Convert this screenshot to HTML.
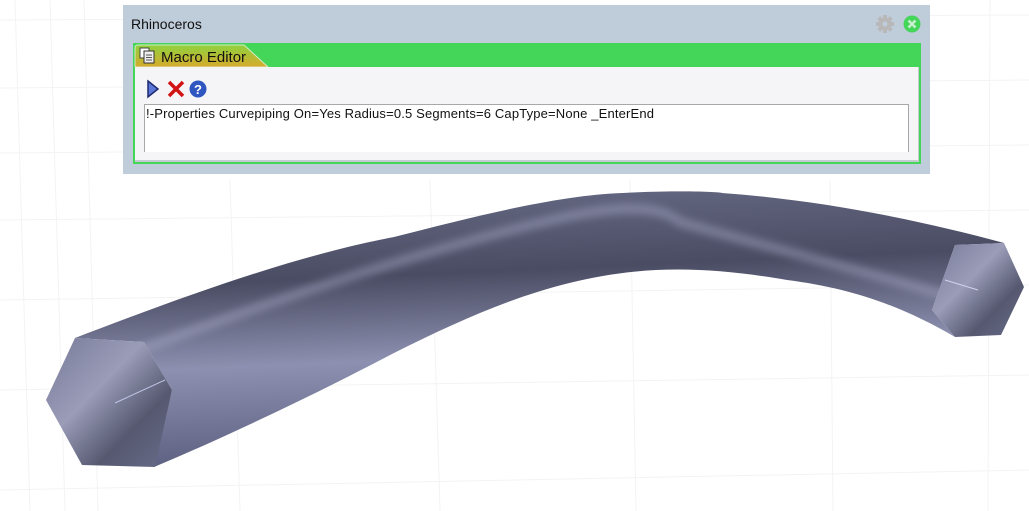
<!DOCTYPE html>
<html><head><meta charset="utf-8"><style>
body{margin:0;width:1029px;height:511px;overflow:hidden;background:#fff;font-family:"Liberation Sans",sans-serif;position:relative}
svg{position:absolute;left:0;top:0}
.panel{position:absolute;left:123px;top:5px;width:807px;height:169px;background:#bfccd9}
.title{position:absolute;left:8px;top:11px;font-size:14px;color:#111}
.frame{position:absolute;left:10px;top:38px;width:788px;height:121px;background:#44d658}
.content{position:absolute;left:2px;top:24px;width:784px;height:95px;background:#f5f5f8;border-bottom:2px solid #c6cbd2;border-right:1px solid #c6cbd2;box-sizing:border-box}
.box{position:absolute;left:9px;top:37px;width:765px;height:48px;background:#fff;border:1px solid #a8a8a8;border-bottom:none;box-sizing:border-box;font-size:13px;letter-spacing:0.16px;color:#111;padding:1px 0 0 1px;white-space:nowrap}
</style></head><body>
<svg width="1029" height="511">
<defs>
<linearGradient id="b" x1="0" y1="0" x2="0.15" y2="1"><stop offset="0" stop-color="#6a6d88"/><stop offset="0.35" stop-color="#4a4c63"/><stop offset="0.65" stop-color="#8d90b0"/><stop offset="1" stop-color="#5d6080"/></linearGradient>
<linearGradient id="c" x1="0" y1="0" x2="1" y2="1"><stop offset="0" stop-color="#777a98"/><stop offset="0.4" stop-color="#9a9cb8"/><stop offset="0.7" stop-color="#55586f"/><stop offset="1" stop-color="#6a6d8a"/></linearGradient>
<filter id="bl"><feGaussianBlur stdDeviation="4"/></filter>
</defs>
<g stroke="#f3f3f3" stroke-width="1" fill="none">
<path d="M0 20 L1029 15 M0 88 L1029 80 M0 153 L1029 145 M0 220 L1029 210 M0 300 L1029 285 M0 390 L1029 375 M0 490 L1029 470"/>
<path d="M15 0 L30 511 M50 0 L65 511 M84 0 L98 511 M230 180 L240 511 M430 180 L440 511 M630 180 L636 511 M830 180 L833 511 M990 0 L988 511"/>
</g>
<path d="M75 338 C200 290 300 255 394 237 C480 215 560 195 623 193 C680 190 722 192 722 193 C820 200 920 220 1004 243 L955 245 L932 310 L955 337 C900 305 850 288 787 280 C740 272 700 268 656 270 C560 275 480 310 394 353 C320 392 230 435 154 467 L172 390 L144 342 Z" fill="url(#b)"/>
<path d="M140 350 C260 305 420 250 560 218 C620 205 660 205 680 222 C760 245 880 275 960 300" stroke="#a9abc8" stroke-width="10" fill="none" opacity="0.45" filter="url(#bl)"/>
<path d="M75 338 L144 342 L172 390 L155 467 L82 465 L46 400 Z" fill="url(#c)"/>
<path d="M955 245 L1004 243 L1024 287 L1001 335 L955 337 L932 310 Z" fill="url(#c)"/>
<line x1="115" y1="403" x2="165" y2="380" stroke="#c0c4e6" stroke-width="1"/>
<line x1="945" y1="280" x2="978" y2="290" stroke="#d0d2ee" stroke-width="1"/>
</svg>
<div class="panel">
<div class="title">Rhinoceros</div>
<svg width="20" height="20" style="left:752px;top:9px" viewBox="0 0 20 20"><g fill="#b8b8b8"><circle cx="10" cy="10" r="6.5"/><rect x="8" y="1" width="4" height="18"/><rect x="1" y="8" width="18" height="4"/><rect x="8" y="1" width="4" height="18" transform="rotate(45 10 10)"/><rect x="8" y="1" width="4" height="18" transform="rotate(-45 10 10)"/></g><circle cx="10" cy="10" r="2.5" fill="#bfccd9"/></svg>
<svg width="20" height="20" style="left:779px;top:9px" viewBox="0 0 20 20"><circle cx="10" cy="10" r="8.5" fill="#44d658"/><path d="M6.5 6.5 L13.5 13.5 M13.5 6.5 L6.5 13.5" stroke="#c9efd0" stroke-width="2.6"/></svg>
<div class="frame">
<svg width="140" height="24" style="left:0;top:0"><defs><linearGradient id="t" x1="0" y1="0" x2="0" y2="1"><stop offset="0" stop-color="#8fd23e"/><stop offset="1" stop-color="#d7a92c"/></linearGradient></defs><path d="M2 24 L2 5 Q2 2 5 2 L111 2 L135 24 Z" fill="url(#t)" stroke="#d9e8c0" stroke-width="1"/>
<g transform="translate(7,5)"><rect x="0" y="0" width="9" height="10" fill="#fff" stroke="#444"/><rect x="4" y="3" width="10" height="12" fill="#eee" stroke="#333"/><path d="M6 7h6M6 9.5h6M6 12h6" stroke="#555"/></g>
<text x="28" y="19" font-size="15" font-family="Liberation Sans, sans-serif" fill="#111">Macro Editor</text></svg>
<div class="content">
<svg width="80" height="24" style="left:10px;top:11px">
<path d="M3 3 L13 11 L3 19 Z" fill="#5b76d6" stroke="#1c2a70" stroke-width="1.5"/>
<path d="M24 4 L38 18 M38 4 L24 18" stroke="#d21414" stroke-width="3.5"/>
<circle cx="53" cy="11" r="8.5" fill="#2f55c0"/><text x="53" y="16" font-size="13" font-weight="bold" text-anchor="middle" fill="#fff" font-family="Liberation Sans, sans-serif">?</text>
</svg>
<div class="box">!-Properties Curvepiping On=Yes Radius=0.5 Segments=6 CapType=None _EnterEnd</div>
</div>
</div>
</div>
</body></html>
